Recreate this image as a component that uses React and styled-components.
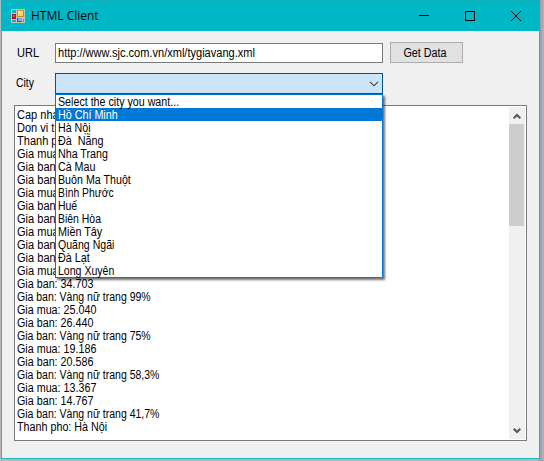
import React from "react";
import styled, { createGlobalStyle } from "styled-components";

const GlobalStyle = createGlobalStyle`
  * { box-sizing: border-box; }
  html, body { margin: 0; height: 461px; overflow: hidden; }
  body { background: #a9afb9; font-family: "Liberation Sans", Arial, sans-serif; font-size: 12px; color: #000; }
`;

const Desktop = styled.div`
  width: 544px;
  height: 461px;
  padding: 0 4px 2px 1px;
  background: linear-gradient(90deg, #b4b7bb 0, #b4b7bb 538px, #969ca8 540px, #b0b7c6 544px);
`;

const Window = styled.div`
  height: 459px;
  display: flex;
  flex-direction: column;
  background: #f0f0f0;
  border: 1px solid #1cb8c6;
  border-top: 0;
`;

const TitleBar = styled.header`
  flex: none;
  height: 31px;
  display: flex;
  align-items: center;
  padding-left: 10px;
  margin: 0 -1px;
  padding-right: 1px;
  background: #00b7c6;
  border-top: 1px solid #16aebb;
`;

const Title = styled.h1`
  flex: 1;
  margin: 0 0 0 6px;
  font: 400 12px/18px "Open Sans", "Noto Sans", sans-serif;
`;

const Caption = styled.div`
  width: 46px;
  height: 30px;
  display: flex;
  align-items: center;
  justify-content: center;
`;

const Form = styled.main`
  flex: 1;
  display: flex;
  flex-direction: column;
  padding: 11px 12px 17px;
`;

const Field = styled.div`
  display: flex;
  align-items: center;
  height: 21px;
  margin-bottom: ${(p) => p.$gap}px;
`;

const Label = styled.label`
  width: 41px;
  padding-left: ${(p) => p.$indent}px;
  padding-bottom: ${(p) => p.$lift || 0}px;
`;

/* Condenses the type to the narrow set width of the system font. */
const Narrow = styled.span`
  display: inline-block;
  white-space: pre;
  transform: scaleX(${(p) => p.$scale || 0.89});
  transform-origin: ${(p) => p.$origin || "left"} center;
`;

const TextInput = styled.div`
  width: 328px;
  height: 20px;
  margin-top: 1px;
  padding-left: 2px;
  border: 1px solid #7a7a7a;
  background: #fff;
  line-height: 18px;
`;

const Button = styled.button`
  width: 73px;
  height: 21px;
  margin-left: 7px;
  padding: 0 3px 0 0;
  border: 1px solid #adadad;
  background: #e1e1e1;
  color: #000;
  font: 12px/18px "Liberation Sans", Arial, sans-serif;
`;

const Combo = styled.div`
  position: relative;
  width: 328px;
  height: 21px;
  display: flex;
  align-items: center;
  justify-content: flex-end;
  padding-right: 3px;
  border: 1px solid #005499;
  background: #cce4f7;
`;

const Menu = styled.ul`
  position: absolute;
  z-index: 1;
  top: 20px;
  left: -1px;
  width: 328px;
  margin: 0;
  padding: 0;
  list-style: none;
  border: 1px solid #0078d7;
  background: #fff;
  box-shadow: 2px 2px 2px rgba(0, 0, 0, 0.55);
`;

const Option = styled.li`
  height: 13px;
  padding-left: 2px;
  line-height: 14px;
  background: ${(p) => (p.$selected ? "#0078d7" : "transparent")};
  color: ${(p) => (p.$selected ? "#fff" : "#000")};
`;

const Output = styled.section`
  flex: 1;
  display: flex;
  justify-content: space-between;
  padding: 1px 1px 1px 1px;
  border: 1px solid #7a7a7a;
  background: #fff;
`;

const Lines = styled.div`
  padding: 1px 0 0 0.6px;
`;

const Line = styled.div`
  height: 13px;
  line-height: 14px;
`;

const ScrollBar = styled.div`
  width: 16px;
  display: flex;
  flex-direction: column;
  background: #f0f0f0;
`;

const ScrollArrow = styled.div`
  height: 17px;
  padding-right: 1px;
  display: flex;
  align-items: center;
  justify-content: center;
`;

const Track = styled.div`
  flex: 1;
`;

const Thumb = styled.div`
  width: 15px;
  height: 102px;
  background: #cdcdcd;
`;

const cities = [
  { name: "Select the city you want..." },
  { name: "Hồ Chí Minh", scale: 0.895 },
  { name: "Hà Nội" },
  { name: "Đà  Nẵng", scale: 0.9 },
  { name: "Nha Trang" },
  { name: "Cà Mau" },
  { name: "Buôn Ma Thuột" },
  { name: "Bình Phước", scale: 0.86 },
  { name: "Huế", scale: 0.87 },
  { name: "Biên Hòa", scale: 0.87 },
  { name: "Miền Tây", scale: 0.9 },
  { name: "Quãng Ngãi", scale: 0.88 },
  { name: "Đà Lạt", scale: 0.9 },
  { name: "Long Xuyên", scale: 0.88 },
];

const lines = [
  "Cap nhat", "Don vi tinh", "Thanh pho", "Gia mua:", "Gia ban:", "Gia ban:", "Gia mua:", "Gia ban:", "Gia ban:",
  "Gia mua:", "Gia ban:", "Gia ban:", "Gia mua:", "Gia ban: 34.703", "Gia ban: Vàng nữ trang 99%",
  "Gia mua: 25.040", "Gia ban: 26.440", "Gia ban: Vàng nữ trang 75%", "Gia mua: 19.186", "Gia ban: 20.586",
  "Gia ban: Vàng nữ trang 58,3%", "Gia mua: 13.367", "Gia ban: 14.767", "Gia ban: Vàng nữ trang 41,7%",
  "Thanh pho: Hà Nội",
];

const lineScale = (line) => {
  if (line.includes("Vàng")) return 0.875;
  return line.length < 12 ? 0.92 : 0.895;
};

const AppIcon = () => (
  <svg width="14" height="14" viewBox="0 0 14 14" shapeRendering="crispEdges">
    <path fill="#c9c5bd" d="M0 0h14v14H0z" />
    <path fill="#00b7c6" d="M1 1h4v3H1zM1 11h4v2H1zM12 10h1v3h-1z" />
    <path fill="#a81616" d="M1 5h4v5H1z" />
    <path fill="#ef5545" d="M2 6h2v2H2z" />
    <path fill="#cf8c10" d="M6 1h7v7H6z" />
    <path fill="#ffd75a" d="M7 2h5v5H7z" />
    <path fill="#fff0a0" d="M7 2h3v2H7z" />
    <path fill="#2458bc" d="M6 9h5v4H6z" />
    <path fill="#79a8f5" d="M7 9h4v3H7z" />
  </svg>
);

const ScrollChevron = ({ down }) => (
  <svg width="8" height="6" viewBox="0 0 8 6">
    <path d={down ? "M.7 .7L4 4L7.3 .7" : "M.7 5.3L4 2L7.3 5.3"} fill="none" stroke="#555" strokeWidth="2" />
  </svg>
);

export default function App() {
  return (
    <>
      <GlobalStyle />
      <Desktop>
        <Window>
          <TitleBar>
            <AppIcon />
            <Title>HTML Client</Title>
            <Caption>
              <svg width="10" height="10"><path d="M0 4.5h10" stroke="#000" /></svg>
            </Caption>
            <Caption>
              <svg width="10" height="10"><path d="M.5 .5h9v9h-9z" fill="none" stroke="#000" /></svg>
            </Caption>
            <Caption>
              <svg width="10" height="10"><path d="M0 0L10 10M10 0L0 10" stroke="#000" /></svg>
            </Caption>
          </TitleBar>
          <Form>
            <Field $gap={10}>
              <Label $indent={3}><Narrow $scale={0.92}>URL</Narrow></Label>
              <TextInput><Narrow $scale={0.92}>http://www.sjc.com.vn/xml/tygiavang.xml</Narrow></TextInput>
              <Button><Narrow $scale={0.9} $origin="center">Get Data</Narrow></Button>
            </Field>
            <Field $gap={11}>
              <Label $indent={2} $lift={2}><Narrow $scale={0.87}>City</Narrow></Label>
              <Combo>
                <svg width="10" height="6"><path d="M1 .8L5 4.8L9 .8" fill="none" stroke="#404040" strokeWidth="1.1" /></svg>
                <Menu>
                  {cities.map((city, i) => (
                    <Option key={city.name} $selected={i === 1}>
                      <Narrow $scale={city.scale}>{city.name}</Narrow>
                    </Option>
                  ))}
                </Menu>
              </Combo>
            </Field>
            <Output>
              <Lines>
                {lines.map((line, i) => (
                  <Line key={i}><Narrow $scale={lineScale(line)}>{line}</Narrow></Line>
                ))}
              </Lines>
              <ScrollBar>
                <ScrollArrow><ScrollChevron /></ScrollArrow>
                <Track><Thumb /></Track>
                <ScrollArrow><ScrollChevron down /></ScrollArrow>
              </ScrollBar>
            </Output>
          </Form>
        </Window>
      </Desktop>
    </>
  );
}
